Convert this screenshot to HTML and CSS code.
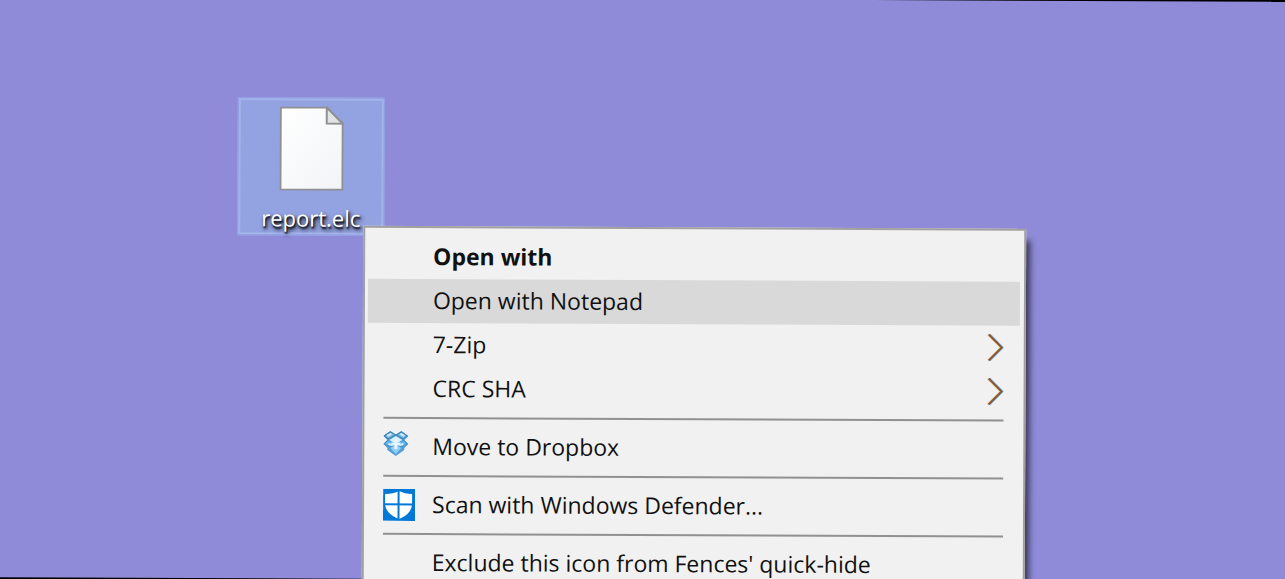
FILE: index.html
```html
<!doctype html>
<html lang="en">
   <head>
      <meta charset="UTF-8" />
      <meta name="viewport" content="width=device-width, initial-scale=1.0" />
      <title>Desktop</title>
      <link rel="stylesheet" href="styles.css">
   </head>
   <body>
      <main class="desktop">
         <button type="button" class="file">
            <svg class="file-icon" viewBox="0 0 64 84" aria-hidden="true">
               <defs>
                  <linearGradient id="paper" x1="0" y1="0" x2="1" y2="1">
                     <stop offset="0" stop-color="#ffffff" />
                     <stop offset="1" stop-color="#f2f4f7" />
                  </linearGradient>
               </defs>
               <path d="M1 1H47L63 17V83H1Z" fill="url(#paper)" stroke="#8f9092" stroke-width="2" />
               <path d="M47 1V17H63Z" fill="#e2e3e5" stroke="#8f9092" stroke-width="2" />
            </svg>
            <span class="file-name">report.elc</span>
         </button>

         <ul class="menu">
            <li><button type="button" class="item default"><span class="label">Open with</span></button></li>
            <li><button type="button" class="item active"><span class="label">Open with Notepad</span></button></li>
            <li>
               <button type="button" class="item">
                  <span class="label">7-Zip</span>
                  <svg class="arrow" viewBox="0 0 18 28" aria-hidden="true">
                     <path d="M4 1L17 14L4 27" stroke="#79b2e6" />
                     <path d="M2 1L15 14L2 27" stroke="#f3cf8e" />
                     <path class="core" d="M3 1L16 14L3 27" stroke="#7d4a2c" />
                  </svg>
               </button>
            </li>
            <li>
               <button type="button" class="item">
                  <span class="label">CRC SHA</span>
                  <svg class="arrow" viewBox="0 0 18 28" aria-hidden="true">
                     <path d="M4 1L17 14L4 27" stroke="#79b2e6" />
                     <path d="M2 1L15 14L2 27" stroke="#f3cf8e" />
                     <path class="core" d="M3 1L16 14L3 27" stroke="#7d4a2c" />
                  </svg>
               </button>
            </li>
            <li class="separator"></li>
            <li>
               <button type="button" class="item">
                  <svg class="icon" viewBox="0 0 32 32" aria-hidden="true">
                     <path d="M7 0L12.500 3.500L18 0L25 5L21 9L25 13L21 17V19L12.500 25L4 19V17L0 13L4 9L0 5Z" fill="#579fd6" />
                     <path d="M7 1L12 4L5 8L1 5ZM18 1L24 5L20 8L13 4Z" fill="#73bdf0" stroke="#437ea8" stroke-width="1" />
                     <path d="M5 9L12 13L7 16L1 13ZM20 9L24 13L18 16L13 13Z" fill="#62b5f3" stroke="#4a8fc2" stroke-width="1" />
                     <path d="M12.500 5L19 9L12.500 13L6 9Z" fill="#d9f0ff" />
                     <path d="M12.500 14L18 17L12.500 23L7 17Z" fill="#8fd0fb" />
                     <path d="M12.500 8V18M8 13H17" stroke="#e4f5ff" stroke-width="3" />
                     <path d="M4 5L8 3M17 3L21 5M5 13L9 14M16 14L20 13" stroke="#d3edff" stroke-width="2" />
                  </svg>
                  <span class="label">Move to Dropbox</span>
               </button>
            </li>
            <li class="separator"></li>
            <li>
               <button type="button" class="item">
                  <svg class="icon" viewBox="0 0 32 32" aria-hidden="true">
                     <path d="M0 0H32V32H0Z" fill="#0078d7" />
                     <path d="M16 2C12 4 8 5 2 5V14C2 22 8 27 16 30C24 27 29 22 29 14V5C24 5 20 4 16 2Z" fill="#fff" />
                     <path d="M15.500 1V31M1 15.500H30" stroke="#0078d7" stroke-width="2" />
                  </svg>
                  <span class="label">Scan with Windows Defender...</span>
               </button>
            </li>
            <li class="separator"></li>
            <li><button type="button" class="item"><span class="label">Exclude this icon from Fences' quick-hide</span></button></li>
         </ul>
      </main>
   </body>
</html>
```

FILE: styles.css
```css
* {
   margin: 0;
   padding: 0;
   box-sizing: border-box;
}
body {
   height: 100vh;
   position: relative;
   overflow: hidden;
   background: #000;
   font-family: "Open Sans", "Noto Sans", sans-serif;
}
/* the whole desktop leans slightly clockwise */
.desktop {
   position: absolute;
   inset: -1px -2px;
   background: #8f8bd8;
   transform: rotate(0.25deg);
}
button {
   border: none;
   background: none;
   font: inherit;
   color: inherit;
}
.file {
   position: absolute;
   left: 239px;
   top: 100px;
   width: 147px;
   padding: 6px 0 0;
   display: flex;
   flex-direction: column;
   align-items: center;
   gap: 12px;
   background: #93a2e0;
   border: 3px solid #a4b4eb;
   outline: 1px solid #919be1;
   outline-offset: -1px;
}
.file-icon {
   width: 64px;
   height: 84px;
}
.file-name {
   font-size: 22px;
   line-height: 30px;
   color: #fff;
   text-shadow: 1px 2px 2px #000, 2px 3px 4px #111;
}
.menu {
   position: absolute;
   left: 365px;
   top: 228px;
   min-width: 663px;
   padding: 7px 4px 7px 3px;
   list-style: none;
   background: #f1f1f1;
   border: 2px solid #a0a0a0;
   box-shadow: 6px 10px 6px -2px rgba(0, 0, 0, 0.6);
}
.item {
   display: flex;
   align-items: center;
   width: 100%;
   height: 44px;
   padding: 0 16px;
   font-size: 23px;
   line-height: 30px;
   text-align: left;
   color: #111;
}
.item.active {
   background: #d9d9d9;
}
.item.default {
   font-weight: bold;
}
.label {
   flex: 1;
   padding: 0 0 2px 49px;
}
.icon {
   width: 32px;
   height: 32px;
}
.icon + .label {
   padding-left: 17px;
}
.arrow {
   width: 18px;
   height: 28px;
   fill: none;
   stroke-width: 2;
}
.arrow .core {
   stroke-width: 2;
}
.arrow path {
   stroke-opacity: 0.9;
}
.separator {
   margin: 6px 16px;
   height: 2px;
   background: #919191;
}
```
